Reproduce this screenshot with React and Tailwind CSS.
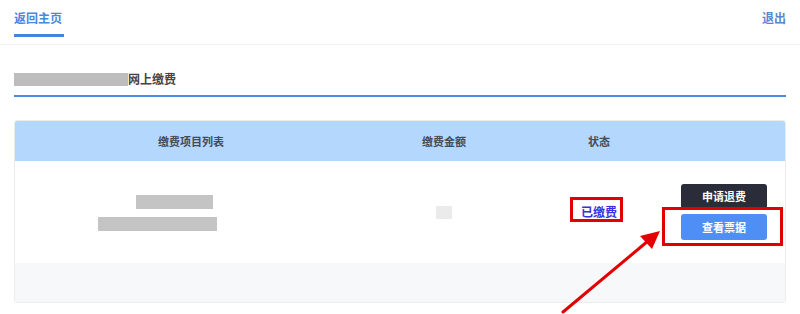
import React from "react";

export default function App() {
  return (
    <div className="relative w-[800px] h-[314px] overflow-hidden bg-white font-['Noto_Sans_CJK_SC',sans-serif]">
      {/* 顶部导航 */}
      <div className="flex items-start justify-between border-b border-[#f0f0f0] h-[45px] px-[14px]">
        <div className="flex flex-col">
          <span className="mt-[10px] text-[12px] font-bold leading-[16px] text-[#4b87dc]">返回主页</span>
          <span className="mt-[8px] h-[3px] w-[50px] bg-[#3f87e0]" />
        </div>
        <span className="mt-[10px] text-[12px] font-bold leading-[16px] text-[#5a86cc]">退出</span>
      </div>

      {/* 标题 */}
      <div className="mx-[14px] mt-[26px] flex items-center h-[16px]">
        <span className="h-[13px] w-[114px] bg-[#bdbdbd]" />
        <span className="text-[12px] font-bold leading-[16px] text-[#444]">网上缴费</span>
      </div>
      <div className="mx-[14px] mt-[8px] h-[2px] bg-[#4a8ee0]" />

      {/* 表格 */}
      <div className="mx-[14px] mt-[23px] rounded-[3px] border border-[#ececec] overflow-hidden">
        <div className="grid grid-cols-[352px_154px_156px_94px] h-[40px] items-center bg-[#b4d8fd] text-[11px] font-bold text-[#454a57]">
          <span className="text-center">缴费项目列表</span>
          <span className="text-center">缴费金额</span>
          <span className="text-center">状态</span>
          <span />
        </div>
        <div className="grid grid-cols-[352px_154px_156px_94px] h-[102px] items-center bg-white">
          <div className="flex flex-col items-center gap-[8px] pt-[2px]">
            <span className="h-[14px] w-[77px] bg-[#c4c4c4] translate-x-[-17px]" />
            <span className="h-[14px] w-[119px] bg-[#c4c4c4] translate-x-[-34px]" />
          </div>
          <div className="flex justify-center">
            <span className="h-[13px] w-[16px] bg-[#ebebeb]" />
          </div>
          <div className="flex justify-center">
            <span className="text-[12px] font-bold text-[#3a2fe0] underline underline-offset-2 decoration-[#3a2fe0]">已缴费</span>
          </div>
          <div className="flex flex-col items-center gap-[5px]">
            <button className="h-[25px] w-[86px] rounded-[3px] bg-[#2a2c3a] text-[11px] font-bold text-white">申请退费</button>
            <button className="h-[26px] w-[86px] rounded-[3px] bg-[#4e8ef5] text-[11px] font-bold text-white">查看票据</button>
          </div>
        </div>
        <div className="h-[39px] bg-[#f7f8fa]" />
      </div>

      {/* 标注 */}
      <div className="absolute left-[570px] top-[197px] h-[25px] w-[53px] border-[3px] border-[#e00000]" />
      <div className="absolute left-[662px] top-[207px] h-[39px] w-[121px] border-[3px] border-[#e00000]" />
      <svg className="absolute left-0 top-0" width="800" height="314" viewBox="0 0 800 314">
        <line x1="563" y1="312" x2="648" y2="241" stroke="#e40000" strokeWidth="3" strokeLinecap="round" />
        <polygon points="660,231 640,236 652,249" fill="#e40000" />
      </svg>
    </div>
  );
}
